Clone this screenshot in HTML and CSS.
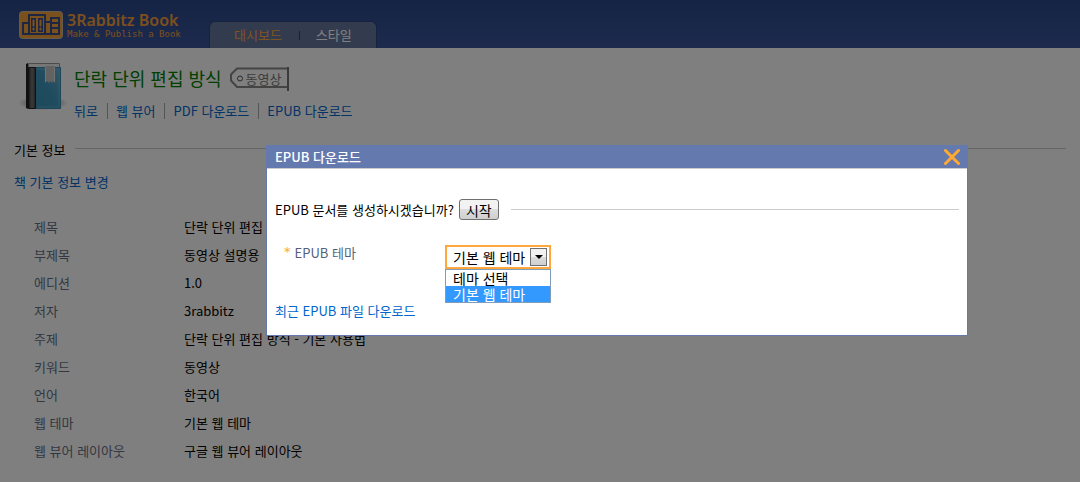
FILE: index.html
```html
<!DOCTYPE html>
<html lang="ko">
<head>
    <meta charset="UTF-8">
    <meta name="viewport" content="width=device-width, initial-scale=1.0">
    <title>3Rabbitz Book</title>
    <link rel="stylesheet" href="styles.css">
</head>
<body>
    <header class="header">
        <a class="logo" href="#">
            <svg class="logo-icon" width="44" height="28" viewBox="0 0 44 28">
                <rect x="0.5" y="0.5" width="43" height="27" rx="3" fill="#f5a03a" stroke="#c9b9a0"/>
                <g fill="none" stroke="#3a4f86" stroke-width="2">
                    <path d="M4 23V12h6"/>
                    <path d="M10 23V4h16v19"/>
                    <path d="M26 11h6M32 23V7h8v16M32 12h8M32 17h8"/>
                    <path d="M3 23h38"/>
                </g>
                <path d="M12 7h5v14h-5zM19 7h5v14h-5z" fill="#3a4f86"/>
                <path d="M14 9h1v6h-1zM14 17h1v2h-1zM21 9h1v6h-1zM21 17h1v2h-1z" fill="#f5a03a" stroke="#f5a03a"/>
            </svg>
            <span class="logo-text">
                <strong class="logo-name">3Rabbitz Book</strong>
                <span class="logo-slogan">Make &amp; Publish a Book</span>
            </span>
        </a>
        <nav class="tabs">
            <a class="tab active" href="#">대시보드</a>
            <a class="tab" href="#">스타일</a>
        </nav>
    </header>

    <main class="page">
        <div class="book">
            <svg class="book-icon" width="52" height="52" viewBox="0 0 52 52">
                <defs>
                    <linearGradient id="cover" x1="0" y1="1" x2="1" y2="0">
                        <stop offset="0" stop-color="#3a93b8"/>
                        <stop offset="0.5" stop-color="#4098be"/>
                        <stop offset="1" stop-color="#62b0d0"/>
                    </linearGradient>
                    <linearGradient id="spine" x1="0" y1="0" x2="1" y2="0">
                        <stop offset="0" stop-color="#333"/>
                        <stop offset="0.5" stop-color="#777"/>
                        <stop offset="1" stop-color="#444"/>
                    </linearGradient>
                    <radialGradient id="shadow">
                        <stop offset="0" stop-color="#000" stop-opacity="0.6"/>
                        <stop offset="1" stop-color="#000" stop-opacity="0"/>
                    </radialGradient>
                </defs>
                <ellipse cx="25" cy="40" rx="25" ry="7" fill="url(#shadow)"/>
                <path d="M10.500 0.500h31v4h-31z" fill="#eee" stroke="#999"/>
                <path d="M8 1l2-1v46l-2-1z" fill="#222"/>
                <path d="M17.500 4.500h25v41h-25z" fill="url(#cover)" stroke="#3a8cb0"/>
                <path d="M19 6h22v38H19" fill="none" stroke="#7cc4e2" stroke-opacity="0.5"/>
                <path d="M10.500 4.500h7v41h-7z" fill="url(#spine)" stroke="#222"/>
                <path d="M27 3h10v17l-2-2-1 2-2-2-1 2-2-2-2 2z" fill="#c4c4c4"/>
                <path d="M27.500 4v15M36.500 4v15" stroke="#e8e8e8"/>
            </svg>
            <div class="book-head">
                <div class="book-title">
                    <h1>단락 단위 편집 방식</h1>
                    <a class="tag" href="#">
                        <svg width="59" height="24" viewBox="0 0 59 24" fill="none" stroke="#888">
                            <path d="M57 1.500H7L1 7.500v6l6 6.500h50" stroke-width="2"/>
                            <path d="M58 0v24" stroke="#777" stroke-width="2"/>
                            <circle cx="10" cy="11.500" r="2.500" stroke="#555"/>
                        </svg>
                        <span class="tag-text">동영상</span>
                    </a>
                </div>
                <ul class="links">
                    <li><a href="#">뒤로</a></li>
                    <li><a href="#">웹 뷰어</a></li>
                    <li><a href="#">PDF 다운로드</a></li>
                    <li><a href="#">EPUB 다운로드</a></li>
                </ul>
            </div>
        </div>

        <h2 class="section-title">기본 정보</h2>
        <a class="edit-link" href="#">책 기본 정보 변경</a>

        <table class="info">
            <tr><th scope="row">제목</th><td>단락 단위 편집 방식</td></tr>
            <tr><th scope="row">부제목</th><td>동영상 설명용</td></tr>
            <tr><th scope="row">에디션</th><td>1.0</td></tr>
            <tr><th scope="row">저자</th><td>3rabbitz</td></tr>
            <tr><th scope="row">주제</th><td>단락 단위 편집 방식 - 기본 사용법</td></tr>
            <tr><th scope="row">키워드</th><td>동영상</td></tr>
            <tr><th scope="row">언어</th><td>한국어</td></tr>
            <tr><th scope="row">웹 테마</th><td>기본 웹 테마</td></tr>
            <tr><th scope="row">웹 뷰어 레이아웃</th><td>구글 웹 뷰어 레이아웃</td></tr>
        </table>
    </main>

    <div class="overlay">
        <div class="dialog" role="dialog" aria-labelledby="dialog-title">
            <div class="dialog-bar">
                <h2 id="dialog-title">EPUB 다운로드</h2>
                <button class="close" type="button" aria-label="닫기">
                    <svg width="16" height="16" viewBox="0 0 16 16">
                        <path d="M1.500 1.500l13 13M14.500 1.500l-13 13" stroke="#ffa834" stroke-width="3" stroke-linecap="round"/>
                    </svg>
                </button>
            </div>
            <form class="dialog-body">
                <div class="question">
                    <span>EPUB 문서를 생성하시겠습니까?</span>
                    <button class="start" type="button">시작</button>
                </div>
                <div class="field">
                    <label for="theme"><span class="required">*</span>EPUB 테마</label>
                    <div class="dropdown">
                        <select id="theme">
                            <option>테마 선택</option>
                            <option selected>기본 웹 테마</option>
                        </select>
                        <span class="arrow">
                            <svg width="8" height="4" viewBox="0 0 8 4"><path d="M0 0h8L4 4z" fill="#000"/></svg>
                        </span>
                        <ul class="options">
                            <li>테마 선택</li>
                            <li class="selected">기본 웹 테마</li>
                        </ul>
                    </div>
                </div>
                <a class="recent" href="#">최근 EPUB 파일 다운로드</a>
            </form>
        </div>
    </div>
</body>
</html>
```

FILE: styles.css
```css
* {
    box-sizing: border-box;
}
body {
    margin: 0;
    background-color: #fff;
    color: #000;
    font-family: "Noto Sans CJK KR", sans-serif;
    font-size: 13px;
    line-height: 20px;
}
h1, h2, ul {
    margin: 0;
    padding: 0;
    font-weight: normal;
}
ul {
    list-style: none;
}
a {
    color: #0066cc;
    text-decoration: none;
}
svg {
    display: block;
}

/* Header */
.header {
    display: flex;
    height: 48px;
    padding-left: 19px;
    background: linear-gradient(#2a4789, #3a559c);
}
.logo {
    display: flex;
    gap: 4px;
    width: 190px;
    padding-top: 11px;
    color: #f5a03a;
}
.logo-text {
    display: flex;
    flex-direction: column;
    white-space: nowrap;
}
.logo-name {
    font-family: "Noto Sans", sans-serif;
    font-size: 16px;
    font-weight: 600;
    line-height: 18px;
}
.logo-slogan {
    font-family: "DejaVu Sans Mono", monospace;
    font-size: 9px;
    line-height: 11px;
}
.tabs {
    display: flex;
    align-items: center;
    align-self: flex-end;
    height: 27px;
    padding: 0 1px;
    border: 1px solid #2a4480;
    border-bottom: 0;
    border-radius: 6px 6px 0 0;
    background-color: #66779f;
}
.tab {
    padding: 0 23px 0 17px;
    color: #fff;
    line-height: 20px;
}
.tab.active {
    padding: 0 17px 0 23px;
    color: #ffa63c;
}
.tab + .tab {
    background: linear-gradient(#333c72, #333c72) left center / 1px 9px no-repeat;
}

/* Page */
.page {
    padding: 15px 14px 0;
}
.book {
    display: flex;
    gap: 4px;
    padding-left: 4px;
}
.book-head {
    padding-top: 2px;
}
.book-title {
    display: flex;
    gap: 8px;
}
.book-title h1 {
    color: #008000;
    font-size: 18px;
    line-height: 26px;
}
.tag {
    position: relative;
    margin-top: 2px;
    color: #777;
}
.tag-text {
    position: absolute;
    top: 2px;
    left: 16px;
    white-space: nowrap;
}
.links {
    display: flex;
    margin-top: 12px;
}
.links li {
    padding-right: 9px;
    line-height: 16px;
}
.links li + li {
    padding-left: 8px;
    border-left: 1px solid #aaa;
}
.section-title {
    display: flex;
    align-items: center;
    gap: 10px;
    margin-top: 21px;
    font-size: 13px;
}
.section-title::after {
    flex: 1;
    height: 1px;
    margin-bottom: 3px;
    background-color: #ccc;
    content: "";
}
.edit-link {
    display: block;
    margin-top: 12px;
}
.info {
    margin: 21px 0 0 20px;
    border-collapse: collapse;
}
.info th, .info td {
    height: 28px;
    padding: 0;
    text-align: left;
}
.info th {
    width: 150px;
    color: #666f85;
    font-weight: normal;
}

/* Dialog */
.overlay {
    position: fixed;
    inset: 0;
    display: flex;
    align-items: flex-start;
    justify-content: flex-end;
    padding: 145px 112px 0 0;
    background-color: rgba(0, 0, 0, 0.5);
}
.dialog {
    width: 702px;
    border: 1px solid #647aaf;
    background-color: #fff;
}
.dialog-bar {
    display: flex;
    align-items: center;
    justify-content: space-between;
    height: 23px;
    padding: 0 7px 0 8px;
    border-bottom: 1px solid #ccc;
    background-color: #647aaf;
}
.dialog-bar h2 {
    color: #fff;
    font-size: 13px;
    font-weight: 500;
}
.close {
    padding: 0;
    border: 0;
    background: none;
    cursor: pointer;
}
.dialog-body {
    padding: 30px 8px 14px;
}
.question {
    display: flex;
    align-items: center;
    gap: 5px;
}
.question::after {
    flex: 1;
    height: 1px;
    margin-left: 7px;
    background-color: #ccc;
    content: "";
}
.start {
    width: 40px;
    height: 21px;
    padding: 0;
    border: 1px solid #707070;
    border-radius: 3px;
    background: linear-gradient(#f2f2f2 50%, #ddd 50%, #cfcfcf);
    color: #000;
    font-family: inherit;
    font-size: 14px;
    line-height: 18px;
}
.field {
    display: flex;
    align-items: flex-start;
    margin-top: 25px;
}
.field label {
    width: 170px;
    padding-left: 9px;
    color: #555f7a;
    line-height: 16px;
}
.required {
    margin-right: 4px;
    color: #ffa834;
    font-family: "DejaVu Sans", sans-serif;
    font-size: 13px;
    line-height: 10px;
    vertical-align: 2px;
}
.dropdown {
    position: relative;
    width: 106px;
    font-size: 14px;
}
.dropdown select {
    display: block;
    width: 100%;
    height: 24px;
    padding: 0 6px;
    border: 2px solid #ffa63c;
    border-radius: 0;
    outline: 0;
    background-color: #fff;
    color: #000;
    font-family: inherit;
    font-size: 14px;
    line-height: 20px;
    appearance: none;
}
.arrow {
    position: absolute;
    top: 3px;
    right: 4px;
    display: flex;
    align-items: center;
    justify-content: center;
    width: 17px;
    height: 18px;
    border: 1px solid #707070;
    background: linear-gradient(#f2f2f2 50%, #ddd 50%, #cfcfcf);
    pointer-events: none;
}
.options {
    position: absolute;
    top: 24px;
    left: 0;
    width: 100%;
    border: 1px solid #7f9db9;
    background-color: #fff;
    line-height: 16px;
}
.options li {
    padding-left: 7px;
}
.options .selected {
    background-color: #3399ff;
    color: #fff;
}
.recent {
    display: block;
    margin-top: 32px;
}
```
